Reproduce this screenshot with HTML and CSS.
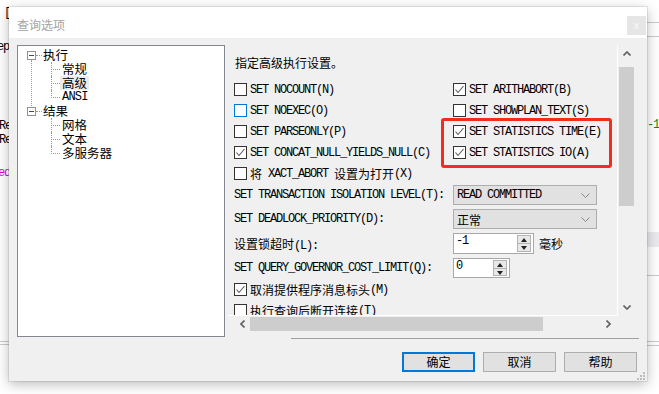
FILE: index.html
```html
<!DOCTYPE html>
<html lang="zh-CN">
<head>
    <meta charset="UTF-8">
    <meta name="viewport" content="width=device-width, initial-scale=1.0">
    <title>查询选项</title>
    <link rel="stylesheet" href="styles.css">
</head>
<body>
    <!-- editor behind the dialog -->
    <div class="editor">
        <span class="code code-bracket">[</span>
        <span class="code code-ep">ep</span>
        <span class="code code-re1">Re</span>
        <span class="code code-re2">Re</span>
        <span class="code code-ed">ed</span>
        <span class="code code-num">-1</span>
        <span class="rule rule-a"></span>
        <span class="rule rule-b"></span>
        <span class="rule rule-c"></span>
        <span class="band"></span>
        <span class="rule rule-left1"></span>
        <span class="rule rule-left2"></span>
        <span class="rule rule-right1"></span>
        <span class="rule rule-right2"></span>
    </div>

    <div class="dialog">
        <div class="titlebar">
            <span class="title">查询选项</span>
            <button class="close">x</button>
        </div>

        <div class="dialog-body">
            <div class="main">
                <ul class="tree">
                    <li class="root has-next">
                        <div class="node"><span class="toggle"></span><span class="label">执行</span></div>
                        <ul class="children">
                            <li class="child"><span class="label">常规</span></li>
                            <li class="child"><span class="label selected">高级</span></li>
                            <li class="child"><span class="label mono">ANSI</span></li>
                        </ul>
                    </li>
                    <li class="root">
                        <div class="node"><span class="toggle"></span><span class="label">结果</span></div>
                        <ul class="children">
                            <li class="child"><span class="label">网格</span></li>
                            <li class="child"><span class="label">文本</span></li>
                            <li class="child"><span class="label">多服务器</span></li>
                        </ul>
                    </li>
                </ul>

                <div class="panel">
                    <div class="content">
                        <p class="intro">指定高级执行设置。</p>

                        <div class="options mono">
                            <label class="check"><span class="box"></span>SET NOCOUNT(N)</label>
                            <label class="check"><span class="box"><svg viewBox="0 0 11 11"><polyline points="1.5,5.5 4,8.5 9.5,2"/></svg></span>SET ARITHABORT(B)</label>
                            <label class="check"><span class="box focus"></span>SET NOEXEC(O)</label>
                            <label class="check"><span class="box"></span>SET SHOWPLAN_TEXT(S)</label>
                            <label class="check"><span class="box"></span>SET PARSEONLY(P)</label>
                            <label class="check"><span class="box"><svg viewBox="0 0 11 11"><polyline points="1.5,5.5 4,8.5 9.5,2"/></svg></span>SET STATISTICS TIME(E)</label>
                            <label class="check"><span class="box"><svg viewBox="0 0 11 11"><polyline points="1.5,5.5 4,8.5 9.5,2"/></svg></span>SET CONCAT_NULL_YIELDS_NULL(C)</label>
                            <label class="check"><span class="box"><svg viewBox="0 0 11 11"><polyline points="1.5,5.5 4,8.5 9.5,2"/></svg></span>SET STATISTICS IO(A)</label>
                            <label class="check"><span class="box"></span><span class="zh">将</span>&nbsp;XACT_ABORT&nbsp;<span class="zh">设置为打开</span>(X)</label>
                        </div>

                        <div class="highlight"></div>

                        <div class="settings mono">
                            <div class="field">
                                <span class="field-label">SET TRANSACTION ISOLATION LEVEL(T):</span>
                                <div class="select">READ COMMITTED<svg class="chevron" viewBox="0 0 9 5"><polyline points="0.5,0.5 4.5,4.5 8.5,0.5"/></svg></div>
                            </div>
                            <div class="field">
                                <span class="field-label">SET DEADLOCK_PRIORITY(D):</span>
                                <div class="select"><span class="zh">正常</span><svg class="chevron" viewBox="0 0 9 5"><polyline points="0.5,0.5 4.5,4.5 8.5,0.5"/></svg></div>
                            </div>
                            <div class="field">
                                <span class="field-label"><span class="zh">设置锁超时</span>(L):</span>
                                <div class="spin">
                                    <span class="spin-value">-1</span>
                                    <span class="spin-arrows"><span class="up"></span><span class="down"></span></span>
                                </div>
                                <span class="unit zh">毫秒</span>
                            </div>
                            <div class="field">
                                <span class="field-label">SET QUERY_GOVERNOR_COST_LIMIT(Q):</span>
                                <div class="spin spin-short">
                                    <span class="spin-value">0</span>
                                    <span class="spin-arrows"><span class="up"></span><span class="down"></span></span>
                                </div>
                            </div>
                        </div>

                        <div class="options-more mono">
                            <label class="check"><span class="box"><svg viewBox="0 0 11 11"><polyline points="1.5,5.5 4,8.5 9.5,2"/></svg></span><span class="zh">取消提供程序消息标头</span>(M)</label>
                            <label class="check"><span class="box"></span><span class="zh">执行查询后断开连接</span>(T)</label>
                        </div>
                    </div>

                    <div class="vscroll">
                        <span class="arrow"><svg viewBox="0 0 8 5"><polyline points="0.5,4.5 4,1 7.5,4.5"/></svg></span>
                        <span class="vtrack"><span class="vthumb"></span></span>
                        <span class="arrow"><svg viewBox="0 0 8 5"><polyline points="0.5,0.5 4,4 7.5,0.5"/></svg></span>
                    </div>
                    <div class="hscroll">
                        <span class="arrow arrow-left"><svg viewBox="0 0 5 8"><polyline points="4.5,0.5 1,4 4.5,7.5"/></svg></span>
                        <span class="htrack"><span class="hthumb"></span></span>
                        <span class="arrow arrow-right"><svg viewBox="0 0 5 8"><polyline points="0.5,0.5 4,4 0.5,7.5"/></svg></span>
                    </div>
                    <div class="corner"></div>
                </div>
            </div>

            <div class="separator"></div>

            <div class="buttons">
                <button class="btn btn-primary">确定</button>
                <button class="btn">取消</button>
                <button class="btn">帮助</button>
            </div>
        </div>

        <svg class="grip" viewBox="0 0 9 9">
            <rect x="7" y="1" width="2" height="2"/>
            <rect x="4" y="4" width="2" height="2"/>
            <rect x="7" y="4" width="2" height="2"/>
            <rect x="1" y="7" width="2" height="2"/>
            <rect x="4" y="7" width="2" height="2"/>
            <rect x="7" y="7" width="2" height="2"/>
        </svg>
    </div>
</body>
</html>
```

FILE: styles.css
```css
body {
    margin: 0;
    width: 659px;
    height: 394px;
    overflow: hidden;
    position: relative;
    background-color: #fff;
    font-family: "Noto Sans CJK SC", sans-serif;
    font-size: 12px;
    color: #000;
}

.mono {
    font-family: "Liberation Mono", "Noto Sans CJK SC", monospace;
    font-size: 12px;
    letter-spacing: -1.2px;
}

.zh {
    font-family: "Noto Sans CJK SC", sans-serif;
    font-size: 12px;
    letter-spacing: 0;
}

/* editor fragments behind the dialog */
.editor .code {
    position: absolute;
    font-family: "Liberation Mono", monospace;
    font-size: 12px;
    line-height: 14px;
    letter-spacing: -1.2px;
}

.code-bracket { left: 4px; top: 6px; }
.code-ep { left: -3px; top: 40px; }
.code-re1 { left: -1px; top: 119px; }
.code-re2 { left: -1px; top: 133px; }
.code-ed { left: -2px; top: 166px; color: #e000e0; }
.code-num { left: 647px; top: 118px; color: #0a8a0a; letter-spacing: 0; }

.editor .rule {
    position: absolute;
    height: 1px;
    background-color: #c8c8d0;
}

.rule-a { left: 647px; right: 0; top: 22px; }
.rule-b { left: 647px; right: 0; top: 36px; }
.rule-c { left: 647px; right: 0; top: 275px; }
.rule-left1 { left: 0; width: 9px; top: 341px; }
.rule-left2 { left: 0; width: 9px; top: 344px; }
.rule-right1 { left: 647px; right: 0; top: 341px; }
.rule-right2 { left: 647px; right: 0; top: 345px; }

.band {
    position: absolute;
    left: 647px;
    right: 0;
    top: 232px;
    height: 15px;
    background-color: #ebebef;
}

/* dialog window */
.dialog {
    position: absolute;
    left: 9px;
    top: 7px;
    width: 638px;
    height: 374px;
    background-color: #f0f0f0;
    box-shadow: 0 0 0 1px rgba(0, 0, 0, 0.08), 0 3px 12px rgba(0, 0, 0, 0.28);
}

.titlebar {
    height: 31px;
    background-color: #fff;
    display: flex;
    align-items: center;
    justify-content: space-between;
    padding-left: 8px;
}

.title {
    color: #a3a3a3;
    font-size: 12px;
    padding-top: 3px;
}

.close {
    width: 19px;
    height: 19px;
    margin-right: 1px;
    margin-top: 5px;
    border: none;
    padding: 0;
    background-color: #e6e6e6;
    color: #fafafa;
    font-family: "Liberation Sans", sans-serif;
    font-size: 11px;
}

.dialog-body {
    height: 343px;
}

.main {
    display: flex;
    align-items: flex-start;
    gap: 3px;
    margin: 7px 0 0 8px;
    height: 292px;
}

/* tree */
.tree {
    width: 208px;
    height: 292px;
    box-sizing: border-box;
    margin: 0;
    padding: 2px 0 0 0;
    list-style: none;
    background-color: #fff;
    border: 1px solid #828790;
    line-height: 14px;
    font-size: 12.5px;
}

.tree ul {
    margin: 0;
    padding: 0;
    list-style: none;
}

.tree li {
    position: relative;
}

.node {
    position: relative;
    height: 14px;
    display: flex;
    align-items: center;
    padding-left: 9px;
}

.node::after {
    content: '';
    position: absolute;
    left: 18px;
    top: 7px;
    width: 6px;
    border-top: 1px dotted #9a9a9a;
}

.toggle {
    position: relative;
    width: 9px;
    height: 9px;
    box-sizing: border-box;
    border: 1px solid #919191;
    background-color: #fff;
    margin-right: 7px;
}

.toggle::after {
    content: '';
    position: absolute;
    left: 1px;
    top: 3px;
    width: 5px;
    height: 1px;
    background-color: #2c4aa0;
}

.root.has-next::after {
    content: '';
    position: absolute;
    left: 13px;
    top: 12px;
    bottom: -2px;
    border-left: 1px dotted #9a9a9a;
}

.child {
    display: flex;
    align-items: center;
    height: 14px;
    padding-left: 44px;
}

.child::before {
    content: '';
    position: absolute;
    left: 33px;
    top: 0;
    width: 8px;
    height: 7px;
    border-left: 1px dotted #9a9a9a;
    border-bottom: 1px dotted #9a9a9a;
}

.child:not(:last-child)::after {
    content: '';
    position: absolute;
    left: 33px;
    top: 7px;
    bottom: 0;
    border-left: 1px dotted #9a9a9a;
}

.label.selected {
    background-color: #ebebeb;
    margin-left: -2px;
    padding: 0 2px;
}

.label.mono {
    letter-spacing: -0.8px;
}

/* scrolling settings panel */
.panel {
    width: 407px;
    height: 287px;
    display: grid;
    grid-template-columns: 390px 17px;
    grid-template-rows: 271px 16px;
}

.content {
    position: relative;
    overflow: hidden;
    box-sizing: border-box;
    border-right: 1px solid #fff;
    border-bottom: 1px solid #fff;
    padding: 10px 0 0 6px;
}

.intro {
    margin: 0 0 8px 1px;
    line-height: 16px;
    font-size: 12px;
}

.options {
    display: grid;
    grid-template-columns: 219px 1fr;
    grid-auto-rows: 21px;
}

.check {
    display: flex;
    align-items: center;
    height: 21px;
    white-space: nowrap;
}

.box {
    width: 13px;
    height: 13px;
    flex: none;
    box-sizing: border-box;
    border: 1px solid #333;
    background-color: #fff;
    margin-right: 3px;
    display: flex;
}

.box.focus {
    border-color: #0078d7;
}

.box svg {
    width: 11px;
    height: 11px;
    fill: none;
    stroke: #5a5a5a;
    stroke-width: 1.1;
}

.highlight {
    position: absolute;
    left: 213px;
    top: 73px;
    width: 171px;
    height: 50px;
    box-sizing: border-box;
    border: 3px solid #f52b1e;
    border-radius: 3px;
}

.settings {
    display: grid;
    grid-template-rows: 20px 20px 21px 20px;
    row-gap: 4px;
    margin-top: 1px;
}

.field {
    display: flex;
    align-items: center;
    white-space: nowrap;
}

.field-label {
    width: 219px;
    flex: none;
}

.select {
    width: 144px;
    height: 20px;
    box-sizing: border-box;
    border: 1px solid #adadad;
    background-color: #e1e1e1;
    display: flex;
    align-items: center;
    justify-content: space-between;
    padding: 0 6px 0 3px;
}

.chevron {
    width: 9px;
    height: 5px;
    fill: none;
    stroke: #888;
    stroke-width: 1;
}

.spin {
    width: 81px;
    height: 21px;
    box-sizing: border-box;
    border: 1px solid #a9a9a9;
    background-color: #fff;
    display: flex;
    align-items: stretch;
    justify-content: space-between;
    padding: 1px 1px 1px 2px;
}

.spin-short {
    width: 57px;
    height: 20px;
}

.spin-value {
    line-height: 12px;
}

.spin-arrows {
    width: 14px;
    display: flex;
    flex-direction: column;
    box-sizing: border-box;
    border: 1px solid #b4b4b4;
    background-color: #e8e8e8;
    margin-right: 1px;
}

.spin-arrows span {
    flex: 1;
    position: relative;
}

.spin-arrows .up {
    border-bottom: 1px solid #b4b4b4;
}

.spin-arrows span::after {
    content: '';
    position: absolute;
    left: 3px;
    width: 0;
    height: 0;
    border-left: 3px solid transparent;
    border-right: 3px solid transparent;
}

.spin-arrows .up::after {
    top: 2px;
    border-bottom: 4px solid #222;
}

.spin-arrows .down::after {
    top: 2px;
    border-top: 4px solid #222;
}

.unit {
    margin-left: 5px;
}

.options-more {
    margin-top: 1px;
}

/* scrollbars */
.vscroll {
    display: flex;
    flex-direction: column;
    align-items: center;
    background-color: #f0f0f0;
}

.vscroll .arrow {
    height: 17px;
    display: flex;
    align-items: center;
    justify-content: center;
}

.vscroll .arrow svg {
    width: 8px;
    height: 5px;
}

.arrow svg {
    fill: none;
    stroke: #606060;
    stroke-width: 1.6;
}

.vtrack {
    flex: 1;
    width: 15px;
}

.vthumb {
    display: block;
    margin-top: 5px;
    height: 139px;
    background-color: #cdcdcd;
}

.hscroll {
    display: flex;
    align-items: center;
    background-color: #f0f0f0;
}

.hscroll .arrow {
    width: 20px;
    height: 16px;
    display: flex;
    align-items: center;
    justify-content: center;
}

.hscroll .arrow-left {
    justify-content: flex-end;
    width: 17px;
}

.hscroll .arrow svg {
    width: 5px;
    height: 8px;
}

.htrack {
    flex: 1;
    height: 14px;
}

.hthumb {
    display: block;
    margin-left: 5px;
    width: 293px;
    height: 14px;
    background-color: #cdcdcd;
}

.corner {
    background-color: #f0f0f0;
}

.separator {
    margin: 1px 8px 0 282px;
    height: 1px;
    background-color: #a0a0a0;
}

.buttons {
    display: flex;
    justify-content: flex-end;
    gap: 8px;
    margin-top: 13px;
    padding-right: 10px;
}

.btn {
    width: 73px;
    height: 20px;
    box-sizing: border-box;
    padding: 0;
    border: 1px solid #adadad;
    background-color: #e1e1e1;
    font-family: "Noto Sans CJK SC", sans-serif;
    font-size: 12px;
    line-height: 16px;
    color: #000;
}

.btn-primary {
    border: 2px solid #0078d7;
}

.grip {
    position: absolute;
    right: 2px;
    bottom: 1px;
    width: 9px;
    height: 9px;
    fill: #bcbcbc;
}
```
